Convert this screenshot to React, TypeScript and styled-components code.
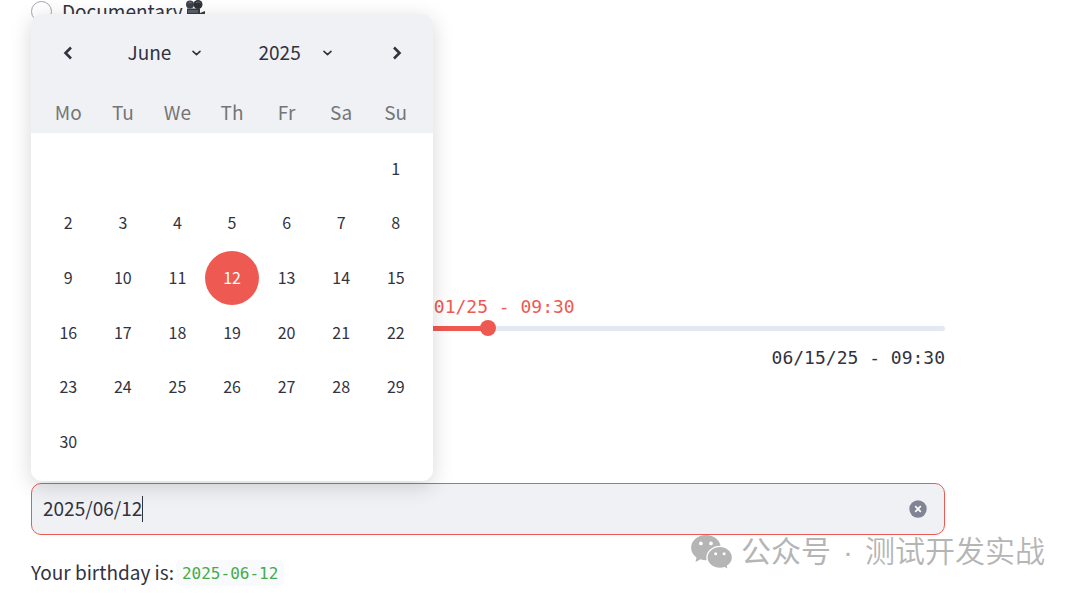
import React, { useState } from "react";
import styled, { createGlobalStyle } from "styled-components";

const sans = `"Noto Sans CJK SC", "Noto Sans", sans-serif`;
const mono = `"DejaVu Sans Mono", monospace`;
const ink = "#31333f";
const red = "#ee5a52";
const panel = "#f0f1f5";

const GlobalStyle = createGlobalStyle`
  *, *::before, *::after { box-sizing: border-box; }
  body { margin: 0; background: #fff; color: ${ink}; font-family: ${sans}; font-size: 19px; }
  button, input, select { font: inherit; color: inherit; }
  button { border: 0; padding: 0; background: none; cursor: pointer; }
`;

const Page = styled.main`
  position: relative;
  padding: 0 135px 10px 31px;
`;

const RadioOption = styled.label`
  display: flex;
  align-items: center;
  height: 22px;
  line-height: 20px;
`;

const RadioInput = styled.input`
  appearance: none;
  width: 21px;
  height: 21px;
  margin: 0 10px 0 0;
  border: 1px solid #a3a4aa;
  border-radius: 50%;
  background: #fff;
`;

const CameraSvg = styled.svg`
  width: 22px;
  height: 22px;
  margin-left: 2px;
`;

const SliderField = styled.section`
  display: flex;
  flex-direction: column;
  margin-top: 273px;
  font-family: ${mono};
  font-size: 18px;
  line-height: 24px;
`;

const SliderValue = styled.output`
  align-self: center;
  color: ${red};
`;

const SliderLimit = styled.span`
  align-self: flex-end;
  margin-top: 10px;
`;

const Slider = styled.input`
  appearance: none;
  width: 100%;
  height: 16px;
  margin: 1px 0 0;
  background: none;

  &::-webkit-slider-runnable-track {
    height: 5px;
    border-radius: 3px;
    background: linear-gradient(to right, ${red} 50%, #e4e8f0 50%);
  }
  &::-webkit-slider-thumb {
    appearance: none;
    width: 16px;
    height: 16px;
    margin-top: -6px;
    border-radius: 50%;
    background: ${red};
  }
`;

const DateField = styled.section`
  position: relative;
  margin-top: 113px;
`;

const DateBox = styled.div`
  display: flex;
  align-items: center;
  height: 52px;
  padding: 0 17px 0 11px;
  border: 1px solid ${red};
  border-radius: 10px;
  background: ${panel};
`;

const DateInput = styled.input`
  field-sizing: content;
  padding: 0 0 2px;
  border: 0;
  outline: 0;
  background: none;
  line-height: 28px;
  caret-color: transparent;
`;

const Caret = styled.span`
  width: 1px;
  height: 26px;
  background: ${ink};
`;

const ClearButton = styled.button`
  display: flex;
  margin-left: auto;
`;

const Popover = styled.div`
  position: absolute;
  z-index: 1;
  left: 0;
  bottom: calc(100% + 2px);
  width: 402px;
  border-radius: 11px;
  overflow: hidden;
  background: #fff;
  box-shadow: 0 5px 21px rgba(0, 0, 0, 0.16);
`;

const PopoverHeader = styled.div`
  padding: 20px 10px 7px;
  background: ${panel};
`;

const MonthBar = styled.div`
  display: flex;
  align-items: center;
  justify-content: space-between;
  height: 38px;
  padding: 0 16px;
`;

const SelectGroup = styled.div`
  display: flex;
  gap: 57px;
  padding-right: 4px;
`;

const ArrowButton = styled.button`
  display: flex;
  align-items: center;
  justify-content: center;
  width: 22px;
  height: 38px;
`;

const SelectWrap = styled.label`
  display: grid;
  align-items: center;

  > * { grid-area: 1 / 1; }
  > svg { justify-self: end; pointer-events: none; }
`;

const HeaderSelect = styled.select`
  appearance: none;
  width: 74px;
  padding: 0 0 2px;
  border: 0;
  background: none;
  line-height: 28px;
`;

const WeekRow = styled.div`
  display: grid;
  grid-template-columns: repeat(7, 1fr);
  margin-top: 26px;
  color: #757575;
  line-height: 28px;
  text-align: center;
`;

const DayGrid = styled.div`
  display: grid;
  grid-template-columns: repeat(7, 1fr);
  padding: 9px 10px 12px;
`;

const DayButton = styled.button<{ $selected: boolean }>`
  aspect-ratio: 1;
  padding-bottom: 2px;
  border-radius: 50%;
  font-size: 16px;
  color: ${(p) => (p.$selected ? "#fff" : ink)};
  background: ${(p) => (p.$selected ? red : "transparent")};

  &:first-child { grid-column-start: 7; }
`;

const Result = styled.p`
  display: flex;
  align-items: center;
  gap: 2px;
  margin: 23px 0 0;
  line-height: 28px;
`;

const ResultLabel = styled.span`
  padding-bottom: 2px;
`;

const Code = styled.code`
  padding: 2px 6px 0;
  border-radius: 5px;
  background: #f9fafb;
  color: #45ab4a;
  font-family: ${mono};
  font-size: 16px;
  line-height: 24px;
`;

const Watermark = styled.aside`
  position: absolute;
  right: 35px;
  bottom: 24px;
  display: flex;
  align-items: center;
  gap: 8px;
  color: #b5b5b5;
  font-family: "Liberation Sans", ${sans};
  font-size: 30px;
  font-weight: 350;
  line-height: 44px;
  pointer-events: none;
`;

const WatermarkText = styled.span`
  display: flex;
  gap: 12px;
`;

const Account = styled.span`
  font-weight: 400;
`;

const months = ["January", "February", "March", "April", "May", "June", "July", "August", "September", "October", "November", "December"];
const years = [2023, 2024, 2025, 2026];
const weekdays = ["Mo", "Tu", "We", "Th", "Fr", "Sa", "Su"];
const days = Array.from({ length: 30 }, (_, i) => i + 1);

const Camera = () => (
  <CameraSvg viewBox="0 0 22 22" aria-hidden="true">
    <circle cx="5" cy="4.5" r="4" fill="#3c4248" />
    <circle cx="13" cy="4.5" r="4.5" fill="#2d3237" />
    <path d="M3 3.5a2.5 2.5 0 0 1 4-.5M11 3a3 3 0 0 1 4.5 0" fill="none" stroke="#6d747a" strokeWidth="1" />
    <path d="M2 8.5h13v4.5l5-2v8l-5-3v4H2z" fill="#343a40" />
    <path d="M3 10h10v3H3z" fill="#596168" />
  </CameraSvg>
);

const Arrow = ({ d }: { d: string }) => (
  <svg width="12" height="16" viewBox="0 0 12 16" fill="none" stroke={ink} strokeWidth="2.6" strokeLinecap="butt" strokeLinejoin="miter" aria-hidden="true">
    <path d={d} />
  </svg>
);

const Chevron = () => (
  <svg width="11" height="8" viewBox="0 0 11 8" fill="none" stroke={ink} strokeWidth="1.6" strokeLinecap="round" strokeLinejoin="round" aria-hidden="true">
    <path d="M2 2.4 5.5 5.7 9 2.4" />
  </svg>
);

const ClearIcon = () => (
  <svg width="18" height="18" viewBox="0 0 18 18" aria-hidden="true">
    <circle cx="9" cy="9" r="8.7" fill="#808495" />
    <path d="m6.2 6.2 5.6 5.6m0-5.6-5.6 5.6" stroke="#fff" strokeWidth="1.7" />
  </svg>
);

const ChatLogo = () => (
  <svg width="42" height="34" viewBox="0 0 124 101" fill="currentColor" aria-hidden="true">
    <path d="M44 0C19 0 0 17 0 38c0 12 6 22 16 29l-3 13 15-8c5 2 10 3 16 3 25 0 44-16 44-37S69 0 44 0Z" />
    <path d="M86 34c-21 0-39 15-39 33s17 32 39 32c5 0 9 0 13-2l12 6-3-11c9-6 15-15 15-25 0-18-17-33-37-33Z" stroke="#fff" strokeWidth="4" />
    <g fill="#fff">
      <circle cx="29" cy="25" r="5.5" />
      <circle cx="59" cy="25" r="5.5" />
      <circle cx="73" cy="56" r="4.5" />
      <circle cx="98" cy="56" r="4.5" />
    </g>
  </svg>
);

export default function App() {
  const [selected, setSelected] = useState(12);
  const day = String(selected).padStart(2, "0");

  return (
    <>
      <GlobalStyle />
      <Page>
        <RadioOption>
          <RadioInput type="radio" name="genre" />
          Documentary
          <Camera />
        </RadioOption>

        <SliderField>
          <SliderValue htmlFor="start">06/01/25 - 09:30</SliderValue>
          <Slider id="start" type="range" min={0} max={28} defaultValue={14} aria-label="Start time" />
          <SliderLimit>06/15/25 - 09:30</SliderLimit>
        </SliderField>

        <DateField>
          <DateBox>
            <DateInput aria-label="Birthday" value={`2025/06/${day}`} readOnly />
            <Caret />
            <ClearButton type="button" aria-label="Clear value">
              <ClearIcon />
            </ClearButton>
          </DateBox>

          <Popover role="dialog" aria-label="Calendar">
            <PopoverHeader>
              <MonthBar>
                <ArrowButton type="button" aria-label="Previous month">
                  <Arrow d="M9 2.5 3.5 8 9 13.5" />
                </ArrowButton>
                <SelectGroup>
                  <SelectWrap>
                    <HeaderSelect aria-label="Month" defaultValue="June">
                      {months.map((m) => <option key={m}>{m}</option>)}
                    </HeaderSelect>
                    <Chevron />
                  </SelectWrap>
                  <SelectWrap>
                    <HeaderSelect aria-label="Year" defaultValue={2025}>
                      {years.map((y) => <option key={y}>{y}</option>)}
                    </HeaderSelect>
                    <Chevron />
                  </SelectWrap>
                </SelectGroup>
                <ArrowButton type="button" aria-label="Next month">
                  <Arrow d="M4 2.5 9.5 8 4 13.5" />
                </ArrowButton>
              </MonthBar>
              <WeekRow>
                {weekdays.map((w) => <span key={w}>{w}</span>)}
              </WeekRow>
            </PopoverHeader>
            <DayGrid>
              {days.map((d) => (
                <DayButton key={d} type="button" $selected={d === selected} onClick={() => setSelected(d)}>
                  {d}
                </DayButton>
              ))}
            </DayGrid>
          </Popover>
        </DateField>

        <Result>
          <ResultLabel>Your birthday is:</ResultLabel>
          <Code>2025-06-{day}</Code>
        </Result>

        <Watermark>
          <ChatLogo />
          <WatermarkText>
            <Account>公众号</Account>
            <span>·</span>
            <span>测试开发实战</span>
          </WatermarkText>
        </Watermark>
      </Page>
    </>
  );
}
